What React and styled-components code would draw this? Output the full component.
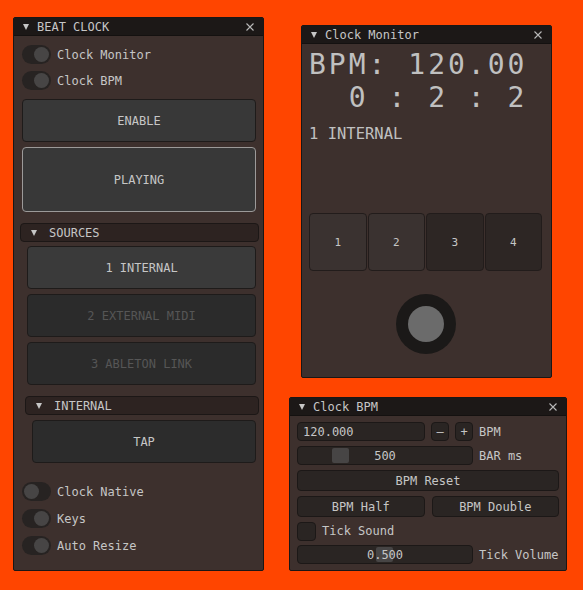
import React from "react";
import styled, { createGlobalStyle } from "styled-components";

const GlobalStyle = createGlobalStyle`
  html, body {
    margin: 0;
    padding: 0;
    background: #ff4500;
  }
  body {
    font-family: "DejaVu Sans Mono", "Liberation Mono", monospace;
    font-size: 12px;
    color: #c6c6c6;
  }
`;

const Desktop = styled.div`
  position: relative;
  width: 583px;
  height: 590px;
  background: #ff4500;
  overflow: hidden;
`;

// floating windows on the desktop canvas
const Window = styled.div`
  position: absolute;
  left: ${(p) => p.$x}px;
  top: ${(p) => p.$y}px;
  width: ${(p) => p.$w}px;
  height: ${(p) => p.$h}px;
  box-sizing: border-box;
  background: #3d302d;
  border: 1px solid #1a1615;
  border-radius: 2px;
  display: flex;
  flex-direction: column;
  overflow: hidden;
`;

const TitleBar = styled.div`
  height: 18px;
  flex: none;
  box-sizing: border-box;
  background: #1c1817;
  border-bottom: 1px solid #141110;
  display: flex;
  align-items: center;
  padding: 0 9px 0 9px;
  gap: 8px;
  line-height: 1;
`;

const Triangle = styled.span`
  width: 0;
  height: 0;
  border-left: 3.5px solid transparent;
  border-right: 3.5px solid transparent;
  border-top: 6px solid ${(p) => p.$color || "#c6c6c6"};
  flex: none;
`;

const TitleText = styled.span`
  flex: 1;
  white-space: pre;
`;

const Close = () => (
  <svg width="8" height="8" viewBox="0 0 8 8">
    <path d="M0.5 0.5L7.5 7.5M7.5 0.5L0.5 7.5" stroke="#b8b8b8" strokeWidth="1.1" />
  </svg>
);

const Body = styled.div`
  flex: 1;
  display: flex;
  flex-direction: column;
  padding: ${(p) => p.$pad || "0 7px"};
`;

/* ---- beat clock ---- */

const ToggleRow = styled.div`
  display: flex;
  align-items: center;
  gap: 6px;
  height: 19px;
  margin-top: ${(p) => p.$mt || 0}px;
  white-space: pre;
`;

const Track = styled.div`
  width: 29px;
  height: 19px;
  border-radius: 10px;
  background: #272322;
  box-sizing: border-box;
  padding: 2px;
  display: flex;
  justify-content: ${(p) => (p.$on ? "flex-end" : "flex-start")};
  flex: none;
`;

const Knob = styled.div`
  width: 15px;
  height: 15px;
  border-radius: 50%;
  background: #474545;
`;

const Toggle = ({ on, label, mt }) => (
  <ToggleRow $mt={mt}>
    <Track $on={on}>
      <Knob />
    </Track>
    {label}
  </ToggleRow>
);

const BigButton = styled.div`
  height: ${(p) => p.$h || 43}px;
  margin-top: ${(p) => p.$mt || 0}px;
  margin-left: ${(p) => p.$ml || 0}px;
  box-sizing: border-box;
  border-radius: 4px;
  border: 1px solid ${(p) => (p.$active ? "#9c9a99" : "#1e1b1a")};
  background: ${(p) => p.$bg || "#383838"};
  color: ${(p) => p.$fg || "#c6c6c6"};
  display: flex;
  align-items: center;
  justify-content: center;
  white-space: pre;
`;

const Header = styled.div`
  height: 19px;
  margin: ${(p) => p.$mt}px -3px 0 ${(p) => p.$ml}px;
  box-sizing: border-box;
  border-radius: 4px;
  border: 1px solid #1c1716;
  background: #2d2321;
  display: flex;
  align-items: center;
  padding-left: 10px;
  gap: 12px;
`;

/* ---- clock monitor ---- */

const BigReadout = styled.div`
  font-size: 28px;
  letter-spacing: 3px;
  line-height: 33px;
  white-space: pre;
  color: #c0c0c0;
  margin-top: ${(p) => p.$mt}px;
`;

const SourceText = styled.div`
  font-size: 15.5px;
  line-height: 16px;
  margin-top: 12px;
  color: #c0c0c0;
`;

const Beats = styled.div`
  display: grid;
  grid-template-columns: repeat(4, 1fr);
  gap: 1px;
  margin-top: 71px;
  margin-right: 1px;
`;

const Beat = styled.div`
  height: 58px;
  box-sizing: border-box;
  border-radius: 4px;
  border: 1px solid #221c1b;
  background: ${(p) => (p.$lit ? "#3a3230" : "#2d2624")};
  display: flex;
  align-items: center;
  justify-content: center;
  font-size: 11px;
`;

const Ring = styled.div`
  align-self: center;
  margin-top: 23px;
  width: 60px;
  height: 60px;
  border-radius: 50%;
  background: #1b1918;
  display: flex;
  align-items: center;
  justify-content: center;
`;

const Dot = styled.div`
  width: 36px;
  height: 36px;
  border-radius: 50%;
  background: #6b6b6b;
`;

/* ---- clock bpm ---- */

const Rows = styled.div`
  display: flex;
  flex-direction: column;
  gap: 5px;
`;

const Row = styled.div`
  display: flex;
  align-items: center;
  gap: ${(p) => p.$gap || 6}px;
  height: ${(p) => p.$h || 19}px;
  white-space: pre;
`;

const Frame = styled.div`
  width: ${(p) => p.$w}px;
  height: 100%;
  flex: ${(p) => (p.$w ? "none" : 1)};
  box-sizing: border-box;
  border-radius: 4px;
  border: 1px solid #1c1817;
  background: #2a2523;
  position: relative;
  display: flex;
  align-items: center;
  justify-content: ${(p) => p.$justify || "center"};
  padding: 0 5px;
`;

const Grab = styled.div`
  position: absolute;
  top: 1px;
  bottom: 1px;
  left: ${(p) => p.$at}px;
  width: 17px;
  border-radius: 2px;
  background: #474545;
`;

const SliderValue = styled.span`
  position: relative;
`;

const Square = styled.div`
  width: 19px;
  height: 19px;
  box-sizing: border-box;
  border-radius: 4px;
  border: 1px solid #1c1817;
  background: #2a2523;
  flex: none;
`;

const Label = styled.span`
  margin-left: ${(p) => p.$ml || 0}px;
`;

export default function App() {
  return (
    <Desktop>
      <GlobalStyle />

      <Window $x={13} $y={17} $w={251} $h={554}>
        <TitleBar>
          <Triangle />
          <TitleText>BEAT CLOCK</TitleText>
          <Close />
        </TitleBar>
        <Body $pad="0 7px 0 8px">
          <Toggle on label="Clock Monitor" mt={9} />
          <Toggle on label="Clock BPM" mt={7} />
          <BigButton $mt={9}>ENABLE</BigButton>
          <BigButton $mt={5} $h={65} $active>
            PLAYING
          </BigButton>
          <Header $mt={11} $ml={-2}>
            <Triangle />
            <span>SOURCES</span>
          </Header>
          <BigButton $mt={4} $ml={5} $bg="#3a3a3a">
            1 INTERNAL
          </BigButton>
          <BigButton $mt={5} $ml={5} $bg="#2b2b2b" $fg="#565656">
            2 EXTERNAL MIDI
          </BigButton>
          <BigButton $mt={5} $ml={5} $bg="#2b2b2b" $fg="#565656">
            3 ABLETON LINK
          </BigButton>
          <Header $mt={11} $ml={3}>
            <Triangle />
            <span>INTERNAL</span>
          </Header>
          <BigButton $mt={5} $ml={10} $bg="#2c2c2c">
            TAP
          </BigButton>
          <Toggle label="Clock Native" mt={19} />
          <Toggle on label="Keys" mt={8} />
          <Toggle on label="Auto Resize" mt={8} />
        </Body>
      </Window>

      <Window $x={301} $y={25} $w={251} $h={353}>
        <TitleBar>
          <Triangle />
          <TitleText>Clock Monitor</TitleText>
          <Close />
        </TitleBar>
        <Body $pad="0 8px 0 7px">
          <BigReadout $mt={4}>BPM: 120.00</BigReadout>
          <BigReadout $mt={0}>{"  0 : 2 : 2"}</BigReadout>
          <SourceText>1 INTERNAL</SourceText>
          <Beats>
            <Beat $lit>1</Beat>
            <Beat $lit>2</Beat>
            <Beat>3</Beat>
            <Beat>4</Beat>
          </Beats>
          <Ring>
            <Dot />
          </Ring>
        </Body>
      </Window>

      <Window $x={289} $y={397} $w={278} $h={174}>
        <TitleBar>
          <Triangle />
          <TitleText>Clock BPM</TitleText>
          <Close />
        </TitleBar>
        <Body $pad="6px 7px 0 7px">
          <Rows>
            <Row>
              <Frame $w={128} $justify="flex-start">
                120.000
              </Frame>
              <Frame $w={18}>–</Frame>
              <Frame $w={18}>+</Frame>
              <Label>BPM</Label>
            </Row>
            <Row>
              <Frame $w={176}>
                <Grab $at={34} />
                <SliderValue>500</SliderValue>
              </Frame>
              <Label>BAR ms</Label>
            </Row>
            <Row $h={21}>
              <Frame>BPM Reset</Frame>
            </Row>
            <Row $h={21} $gap={7}>
              <Frame>BPM Half</Frame>
              <Frame>BPM Double</Frame>
            </Row>
            <Row $h={18}>
              <Square />
              <Label>Tick Sound</Label>
            </Row>
            <Row>
              <Frame $w={176}>
                <Grab $at={78} />
                <SliderValue>0.500</SliderValue>
              </Frame>
              <Label>Tick Volume</Label>
            </Row>
          </Rows>
        </Body>
      </Window>
    </Desktop>
  );
}
